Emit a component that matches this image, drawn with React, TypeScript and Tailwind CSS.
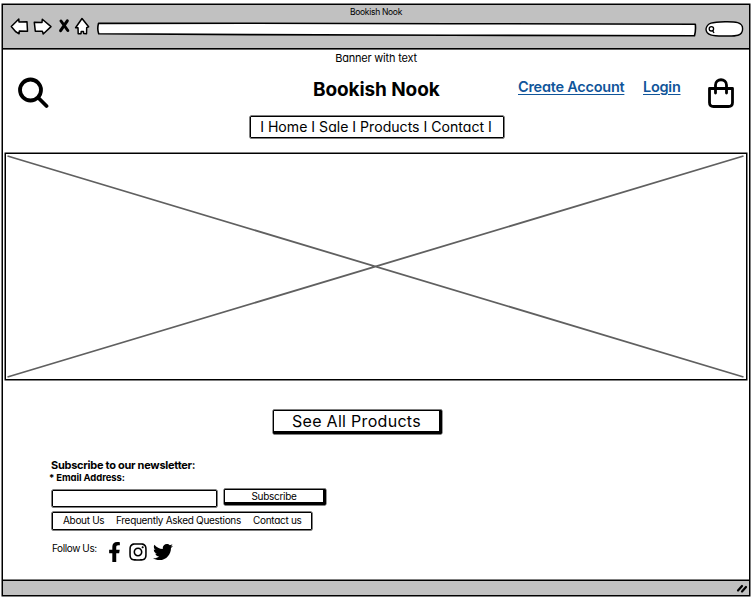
import React from "react";
import { FaFacebookF, FaInstagram, FaTwitter } from "react-icons/fa";

function BrowserBar() {
  return (
    <header className="h-[44px] shrink-0 border-b border-black bg-[#c1c1c1] shadow-[0_0.6px_0_0_black]">
      <div className="flex h-[11px] items-center justify-center pt-[3px] text-[8.5px] tracking-[-0.3px]">Bookish Nook</div>
      <div className="flex h-[21px] items-center pl-[6px]">
        <svg className="-mt-[2px]" width="84" height="22" viewBox="9 15 84 22" fill="white" stroke="black" strokeWidth="1.5" strokeLinejoin="round" strokeLinecap="round">
          <path d="M11.3 26.5 18.8 19 19 22 27 21.8 27.5 31.3 19.3 31 19.1 33.8 15.5 31.5Z" />
          <path d="M34.3 22.3 42 22.5 42.3 19.2 51 26.6 43.2 34 42.4 31.3 35.3 31.2Z" />
          <path d="M61 21 67.8 30.5M67.3 20.8 60.6 30.7" fill="none" strokeWidth="3" />
          <path d="M82 18.5 88.6 26.8 86.7 27.6 86.5 33.8 83.7 33.5 83.5 31.5 81.2 31.5 81 33.8 78.2 33.7 78 27.8 75.6 27.7Z" />
        </svg>
        <svg className="ml-[3px] mt-[5px]" width="601" height="15" viewBox="96 22 601 15" fill="white" stroke="black" strokeWidth="1.6" strokeLinejoin="round">
          <path d="M98.5 23.4 250 23.3 450 23.7 695.3 24.2Q696 30 694.5 35.8L450 35.2 250 34.6 98.7 33.7Q97 29 98.5 23.4Z" />
        </svg>
        <svg className="ml-[8px] mt-[5px]" width="39" height="18" viewBox="705 20 39 18" fill="white" stroke="black" strokeWidth="1.4">
          <path d="M706 29C707 23 712 22 725 21.7C735 21.5 743 22 742.6 29C742.6 36 736 36.3 725 36C712 36.2 706 35 706 29Z" />
          <circle cx="711.4" cy="28.8" r="2.2" strokeWidth="1.3" />
          <path d="M712.5 30.5 714 33" strokeWidth="1.4" />
        </svg>
      </div>
    </header>
  );
}

function SiteHeader() {
  return (
    <section className="h-[104px] shrink-0">
      <div className="flex h-[19px] items-center justify-center text-[11px] tracking-[-0.2px]">Banner with text</div>
      <div className="flex h-[46px]">
        <svg className="ml-[14px] mt-[9px]" width="32" height="32" viewBox="17 77 32 32" fill="none" stroke="black" strokeWidth="3.8" strokeLinecap="round">
          <circle cx="30.5" cy="90" r="10.5" />
          <path d="m38.5 98 8 8" />
        </svg>
        <h1 className="ml-[264px] mt-[8px] w-[205px] whitespace-nowrap text-[19px] font-bold leading-[28px] tracking-[-0.1px]">Bookish Nook</h1>
        <nav className="mt-[7px] flex w-[188px] whitespace-nowrap text-[14.5px] font-semibold leading-[24px] tracking-[-0.25px] text-[#10559a]">
          <a className="w-[125px] underline underline-offset-2" href="#">Create Account</a>
          <a className="underline underline-offset-2" href="#">Login</a>
        </nav>
        <svg className="mt-[9px]" width="30" height="32" viewBox="706 77 30 32" fill="none" stroke="black" strokeWidth="2.8" strokeLinecap="round">
          <path d="M709.5 88.5h23v14q0 4-4 4h-15q-4 0-4-4z" strokeLinejoin="round" />
          <path d="M715.5 93v-8c0-7 11-7 11 0v8" />
        </svg>
      </div>
      <nav className="ml-[247px] mt-[2px] flex h-[22px] w-[254px] items-center justify-center whitespace-nowrap rounded-[1px] border border-black pr-[2px] text-[14.1px] shadow-[0_0_0_0.5px_black]">I Home I Sale I Products I Contact I</nav>
    </section>
  );
}

function Newsletter() {
  return (
    <footer className="ml-[46px] mt-[24px] flex flex-col items-start whitespace-nowrap">
      <h2 className="ml-[2px] h-[14px] text-[11px] font-bold leading-[14px] tracking-[-0.27px]">Subscribe to our newsletter:</h2>
      <label className="h-[17px] text-[9.5px] font-bold leading-[12px] tracking-[-0.1px]">* Email Address:</label>
      <div className="ml-[3px] flex h-[23px] items-start">
        <div className="mt-px h-[17px] w-[165px] rounded-[1px] border border-black shadow-[0_0_0_0.5px_black]" />
        <button className="ml-[7px] h-[16px] w-[102px] rounded-[1px] border border-b-[3px] border-r-[3px] border-black text-[10px] leading-[13px] tracking-[-0.3px] shadow-[0_0_0_0.4px_black]">Subscribe</button>
      </div>
      <nav className="ml-[3px] flex h-[18px] w-[260px] rounded-[1px] border border-black pl-[10px] text-[10px] leading-[15px] tracking-[-0.3px] shadow-[0_0_0_0.5px_black]">
        <a className="w-[53px]">About Us</a>
        <a className="w-[137px]">Frequently Asked Questions</a>
        <a>Contact us</a>
      </nav>
      <div className="ml-[3px] mt-[12px] flex h-[20px]">
        <span className="w-[54px] text-[10px] leading-[12px] tracking-[-0.4px]">Follow Us:</span>
        <FaFacebookF className="ml-[1px] h-[20px] w-[15px]" />
        <FaInstagram className="ml-[6px] size-[20px]" />
        <FaTwitter className="ml-[5px] size-[20px]" />
      </div>
    </footer>
  );
}

export default function App() {
  return (
    <div className="h-[602px] w-[755px] overflow-hidden bg-white pl-[2px] pt-[4px] font-['Inter','Liberation_Sans',sans-serif] text-black [font-feature-settings:'cv11','ss03']">
      <main className="flex h-[592px] w-[748px] flex-col border border-black shadow-[0_0_0_0.5px_black]">
        <BrowserBar />
        <SiteHeader />
        <div className="ml-[2px] h-[227px] w-[742px] shrink-0 border border-black shadow-[0_0_0_0.5px_black]">
          <svg className="h-full w-full" viewBox="0 0 739 225" stroke="#606060" strokeWidth="1.8">
            <path d="M1 2 737 223M1 223 737 2" />
          </svg>
        </div>
        <button className="ml-[270px] mt-[30px] h-[24px] w-[169px] shrink-0 whitespace-nowrap rounded-[1px] border border-b-[3px] border-r-[3px] border-black text-[16px] leading-[21px] tracking-[0.3px] shadow-[0_0_0_0.4px_black]">See All Products</button>
        <Newsletter />
        <div className="mt-auto flex h-[15px] shrink-0 items-center justify-end border-t border-black bg-[#c1c1c1] pr-[1px] shadow-[0_-0.5px_0_0_black]">
          <svg className="mt-[2px]" width="12" height="10" viewBox="0 0 12 10" stroke="black" strokeWidth="2.2" strokeLinecap="round">
            <path d="m2 6.5 4-4.5M6 7.5l4-4.5" />
          </svg>
        </div>
      </main>
    </div>
  );
}
